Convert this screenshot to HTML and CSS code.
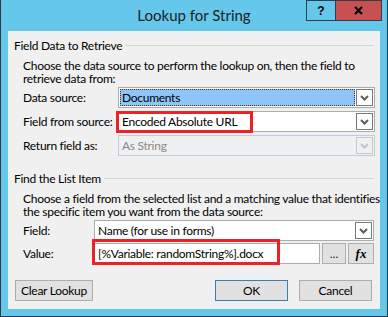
FILE: index.html
```html
<!DOCTYPE html>
<html>
<head>
<meta charset="utf-8">
<link rel="stylesheet" href="styles.css">
</head>
<body>
<div class="window">
  <div class="titlebar">
    <div class="title">Lookup for String</div>
    <div class="caption-btns">
      <div class="cb help">?</div>
      <div class="cb close">
        <svg width="9" height="9" viewBox="0 0 9 9"><path d="M1 1 L8 8 M8 1 L1 8" stroke="#000" stroke-width="2.2" fill="none"/></svg>
      </div>
    </div>
  </div>
  <div class="client">
    <section class="group g1">
      <div class="group-head"><span>Field Data to Retrieve</span><i class="rule"></i></div>
      <p class="desc">Choose the data source to perform the lookup on, then the field to<br>retrieve data from:</p>
      <div class="rows">
        <div class="row">
          <span class="lbl">Data source:</span>
          <div class="select wide focused">
            <span class="val"><span class="hl">Documents</span></span>
            <span class="dd"><svg width="9" height="6" viewBox="0 0 9 6"><path d="M1 1 L4.5 4.5 L8 1" stroke="#5b5b5b" stroke-width="2" fill="none"/></svg></span>
          </div>
        </div>
        <div class="row">
          <span class="lbl">Field from source:</span>
          <div class="select wide">
            <span class="val">Encoded Absolute URL</span>
            <span class="dd"><svg width="9" height="6" viewBox="0 0 9 6"><path d="M1 1 L4.5 4.5 L8 1" stroke="#5b5b5b" stroke-width="2" fill="none"/></svg></span>
            <i class="mark mark1"></i>
          </div>
        </div>
        <div class="row">
          <span class="lbl">Return field as:</span>
          <div class="select wide disabled">
            <span class="val">As String</span>
            <span class="dd"><svg width="9" height="6" viewBox="0 0 9 6"><path d="M1 1 L4.5 4.5 L8 1" stroke="#c4c4c4" stroke-width="2" fill="none"/></svg></span>
          </div>
        </div>
      </div>
    </section>
    <section class="group g2">
      <div class="group-head"><span>Find the List Item</span><i class="rule"></i></div>
      <p class="desc">Choose a field from the selected list and a matching value that identifies<br>the specific item you want from the data source:</p>
      <div class="rows">
        <div class="row">
          <span class="lbl short">Field:</span>
          <div class="select field">
            <span class="val">Name (for use in forms)</span>
            <span class="dd"><svg width="9" height="6" viewBox="0 0 9 6"><path d="M1 1 L4.5 4.5 L8 1" stroke="#5b5b5b" stroke-width="2" fill="none"/></svg></span>
          </div>
        </div>
        <div class="row">
          <span class="lbl short">Value:</span>
          <div class="valuebox">
            <div class="textbox">[%Variable: randomString%].docx</div>
            <i class="mark mark2"></i>
          </div>
          <div class="sbtn dots">...</div>
          <div class="sbtn fx"><i>fx</i></div>
        </div>
      </div>
    </section>
    <div class="actions">
      <div class="btn clear">Clear Lookup</div>
      <div class="spacer"></div>
      <div class="btn ok">OK</div>
      <div class="btn cancel">Cancel</div>
    </div>
  </div>
</div>
</body>
</html>
```

FILE: styles.css
```css
html, body {
  margin: 0;
  padding: 0;
}
body {
  font-family: "Lato", "Noto Sans", sans-serif;
  font-size: 12px;
  letter-spacing: -0.28px;
  color: #000;
}
.window {
  width: 388px;
  height: 317px;
  box-sizing: border-box;
  background: #65c8ea;
  border: 1px solid #2c3a44;
  border-top: none;
  display: flex;
  flex-direction: column;
}
.titlebar {
  height: 31px;
  display: grid;
  grid-template-columns: 1fr;
}
.title {
  grid-area: 1 / 1;
  justify-self: center;
  align-self: start;
  padding-top: 5px;
  font-size: 15px;
  line-height: 20px;
  letter-spacing: 0;
  color: #1c2226;
}
.caption-btns {
  grid-area: 1 / 1;
  justify-self: end;
  align-self: start;
  display: flex;
  margin-right: 5px;
}
.cb {
  height: 21px;
  box-sizing: border-box;
  border: 1px solid #2f3e48;
  display: flex;
  align-items: center;
  justify-content: center;
}
.help {
  width: 29px;
  border-right: none;
  font-family: "Liberation Sans", sans-serif;
  font-weight: bold;
  font-size: 12px;
  letter-spacing: 0;
  padding-top: 1px;
}
.close {
  width: 47px;
  background: #c75050;
}
.client {
  margin: 0 7px 7px 7px;
  height: 278px;
  background: #f0f0f0;
  display: flex;
  flex-direction: column;
}
.group-head {
  display: flex;
  align-items: center;
  height: 16px;
  padding-left: 6px;
  padding-right: 6px;
  gap: 3px;
  white-space: nowrap;
}
.g1 .group-head { margin-top: 6px; }
.g2 .group-head { margin-top: 14px; }
.rule {
  flex: 1;
  height: 1px;
  background: #d5d5d5;
}
.desc {
  margin: 6px 0 0 0;
  padding-left: 15px;
  line-height: 13px;
  white-space: nowrap;
}
.rows {
  display: flex;
  flex-direction: column;
  margin-top: 2px;
  gap: 3px;
}
.g2 .rows { gap: 2px; }
.row {
  display: flex;
  align-items: center;
  height: 21px;
  padding-left: 15px;
}
.lbl {
  width: 95px;
  flex: none;
  white-space: nowrap;
}
.lbl.short { width: 71px; }
.select {
  position: relative;
  display: flex;
  box-sizing: border-box;
  height: 21px;
  border: 1px solid #acacac;
  background: #fff;
  padding: 1px;
  gap: 1px;
}
.select.wide { width: 257px; }
.select.field { width: 280px; }
.select .val {
  flex: 1;
  line-height: 17px;
  padding-left: 2px;
  white-space: nowrap;
  overflow: hidden;
}
.select.focused .val { padding-left: 0; display: flex; }
.select .hl {
  flex: 1;
  background: #8ec5f9;
  outline: 1px dotted #4a3216;
  outline-offset: -1px;
  padding-left: 2px;
}
.dd {
  flex: none;
  width: 17px;
  height: 17px;
  box-sizing: border-box;
  border: 1px solid #7a7a7a;
  background: #fff;
  display: flex;
  align-items: center;
  justify-content: center;
}
.select.disabled {
  background: #f0f0f0;
  border-color: #bcd0e3;
  color: #8a8a8a;
}
.select.disabled .dd {
  border-color: #c8c8c8;
  background: #f0f0f0;
}
.mark {
  position: absolute;
  box-sizing: border-box;
  border: 3px solid #ec2229;
  pointer-events: none;
}
.mark1 {
  left: -3px;
  top: -1px;
  width: 137px;
  height: 22px;
}
.valuebox {
  position: relative;
  width: 226px;
  height: 21px;
}
.textbox {
  box-sizing: border-box;
  height: 21px;
  border: 1px solid #acacac;
  background: #fff;
  line-height: 19px;
  padding-left: 3px;
  white-space: nowrap;
}
.mark2 {
  left: -2px;
  top: -4px;
  width: 188px;
  height: 26px;
}
.sbtn {
  box-sizing: border-box;
  height: 21px;
  border: 1px solid #adadad;
  background: #e1e1e1;
  display: flex;
  align-items: center;
  justify-content: center;
  margin-left: 2px;
}
.dots {
  width: 24px;
  color: #1a1a6e;
  line-height: 12px;
  letter-spacing: 0;
}
.fx {
  width: 26px;
  font-family: "Liberation Serif", serif;
  font-weight: bold;
  font-size: 13px;
  letter-spacing: 0;
}
.actions {
  display: flex;
  margin-top: 16px;
  padding: 0 8px 0 7px;
}
.spacer { flex: 1; }
.btn {
  box-sizing: border-box;
  height: 21px;
  border: 1px solid #adadad;
  background: #e1e1e1;
  display: flex;
  align-items: center;
  justify-content: center;
}
.clear { width: 78px; }
.ok { width: 73px; border-color: #3c7fb1; margin-right: 11px; }
.cancel { width: 73px; }
```
